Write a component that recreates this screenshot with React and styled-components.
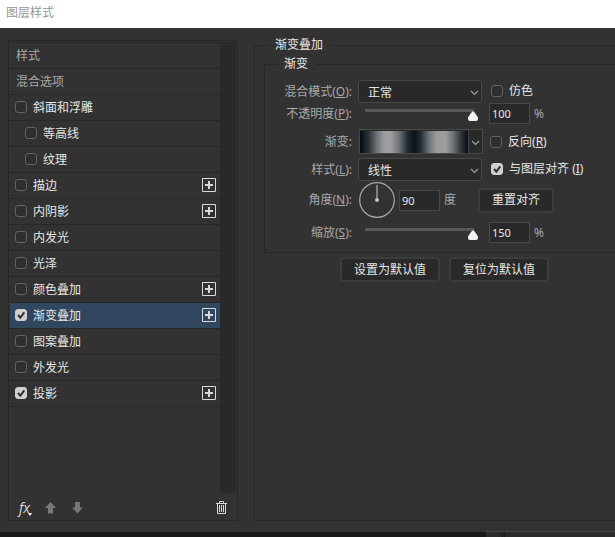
import React, { useState } from 'react';
import styled, { createGlobalStyle, css } from 'styled-components';

const c = {
  face: '#323232',
  line: '#272727',
  well: '#292929',
  edge: '#484848',
  bright: '#e6e6e6',
  dim: '#a8a8a8',
  select: '#30475f',
};

const GlobalStyle = createGlobalStyle`
  * { box-sizing: border-box; }
  body { margin: 0; background: ${c.face}; }
  body, button, input, select {
    font-family: "Noto Sans", "Noto Sans CJK SC", sans-serif;
    font-size: 12px;
    line-height: 16px;
  }
`;

const Window = styled.div`
  min-height: 100vh;
  display: flex;
  flex-direction: column;
  color: ${c.bright};
`;

const TitleBar = styled.header`
  height: 28px;
  padding: 0 6px 2px;
  display: flex;
  align-items: center;
  background: #fff;
  color: #959595;
`;

const Title = styled.h1`
  margin: 0;
  font-size: 12px;
  font-weight: 400;
`;

const Body = styled.main`
  flex: 1;
  display: flex;
  gap: 16px;
  padding: 9px 0 10px 8px;
`;

const StylePanel = styled.section`
  width: 230px;
  flex: none;
  margin-top: 3px;
  padding: 1px;
  border: 1px solid ${c.line};
  display: flex;
  flex-direction: column;
`;

const ListArea = styled.div`
  flex: 1;
  display: flex;
`;

const StyleList = styled.ul`
  flex: 1;
  margin: 0;
  padding: 0;
  list-style: none;
  border-top: 1px solid ${c.line};
`;

const ScrollTrack = styled.div`
  width: 16px;
  background: ${c.well};
`;

const StyleRow = styled.li`
  height: 26px;
  padding: 0 4px ${(p) => (p.$plain ? '0' : '1px')} ${(p) => (p.$indent ? '15px' : p.$plain ? '6px' : '5px')};
  display: flex;
  align-items: center;
  justify-content: space-between;
  border-bottom: 1px solid ${c.line};
  color: ${(p) => (p.$plain ? c.dim : c.bright)};
  background: ${(p) => (p.$selected ? c.select : 'transparent')};
  label > span:last-child { padding-top: 2px; }
`;

const CheckLabel = styled.label`
  display: flex;
  align-items: center;
  gap: 6px;
  white-space: pre;
`;

const CheckCell = styled.span`
  display: grid;
  width: 12px;
  height: 12px;
  > * { grid-area: 1 / 1; }
`;

const CheckInput = styled.input`
  appearance: none;
  width: 12px;
  height: 12px;
  margin: 0;
  border: 1px solid #626262;
  border-radius: 3px;
  background: #2f2f2f;
  &:checked {
    border-color: #d0d0d0;
    background: #d0d0d0;
  }
`;

const CheckMark = styled.svg`
  width: 12px;
  height: 12px;
  pointer-events: none;
`;

const iconButton = css`
  border: 0;
  padding: 0;
  background: none;
  color: inherit;
  display: flex;
`;

const AddButton = styled.button`
  ${iconButton}
`;

const Footer = styled.div`
  height: 26px;
  padding: 3px 9px 0 8px;
  display: flex;
  align-items: center;
`;

const FooterButton = styled.button`
  ${iconButton}
  width: 27px;
  color: ${(p) => (p.$active ? '#d8d8d8' : '#777')};
  &:last-child {
    width: auto;
    margin-left: auto;
  }
`;

const FxText = styled.span`
  padding-left: 1px;
  font: italic 500 14px/16px "Open Sans", sans-serif;
`;

const FxArrow = styled.svg`
  align-self: flex-end;
  width: 4px;
  height: 3px;
  margin-left: -2px;
`;

const Group = styled.fieldset`
  min-width: 0;
  margin: 0;
  border: 1px solid ${c.line};
  border-right: 0;
  ${(p) => (p.$outer
    ? css`flex: 1; padding: 3px 0 0 9px;`
    : css`padding: 8px 0 9px 8px;`)}
`;

const Legend = styled.legend`
  height: 16px;
  margin-left: 5px;
  padding: 0 8px 0 6px;
`;

const Field = styled.div`
  display: flex;
  align-items: center;
  margin-top: ${(p) => p.$space || 0}px;
`;

const FieldLabel = styled.label`
  width: 79px;
  flex: none;
  margin-right: ${(p) => p.$gap}px;
  text-align: right;
  white-space: nowrap;
  color: ${c.dim};
`;

const SelectBox = styled.span`
  width: 124px;
  height: 23px;
  display: grid;
  align-items: center;
  border: 1px solid ${c.edge};
  border-radius: 3px;
  background: ${c.well};
  > * { grid-area: 1 / 1; }
`;

const Select = styled.select`
  appearance: none;
  width: 100%;
  height: 21px;
  padding: 2px 20px 0 9px;
  border: 0;
  background: transparent;
  color: ${c.bright};
`;

const Chevron = styled.svg`
  justify-self: end;
  width: 9px;
  height: 6px;
  margin: 3px 2px 0 0;
  pointer-events: none;
`;

const Slider = styled.input`
  appearance: none;
  align-self: flex-start;
  width: 113px;
  height: 12px;
  margin: 6px 11px 0 6px;
  background: linear-gradient(#595959, #595959) 0 0 / 109px 3px no-repeat;
  &::-webkit-slider-thumb {
    appearance: none;
    width: 10px;
    height: 10px;
    margin-top: 2px;
    background: #f2f2f2;
    border-radius: 0 0 2px 2px;
    clip-path: polygon(50% 0, 70% 20%, 100% 65%, 100% 100%, 0 100%, 0 65%, 30% 20%);
  }
`;

const NumberInput = styled.input`
  width: 41px;
  height: 21px;
  padding: 0 2px;
  border: 1px solid ${c.edge};
  background: ${c.well};
  color: ${c.bright};
  font-size: 11px;
`;

const Unit = styled.span`
  margin-left: 4px;
  color: ${c.dim};
`;

const GradientPicker = styled.div`
  width: 124px;
  height: 25px;
  display: flex;
  border: 1px solid ${c.edge};
  background: ${c.well};
`;

const GradientSwatch = styled.button`
  flex: 1;
  border: 0;
  margin: 1px 0 0;
  padding: 0;
  background: linear-gradient(90deg,
    #020b16 0%, #2c3237 8%, #71757a 16%, #9a9a9a 22%, #9f9f9f 28%, #71757a 36%,
    #232a31 44%, #0a131e 50%, #232a31 56%, #71757a 64%, #9a9a9a 71%, #9f9f9f 79%,
    #71757a 86%, #2c3237 94%, #040d19 100%);
`;

const GradientMenu = styled.button`
  ${iconButton}
  width: 14px;
  padding-left: 2px;
  border-left: 1px solid ${c.edge};
  align-items: center;
`;

const Dial = styled.svg`
  width: 36px;
  height: 36px;
  flex: none;
  margin-right: 4px;
`;

const Extra = styled.div`
  margin-left: ${(p) => (p.$wide ? '9px' : '7px')};
  padding-bottom: ${(p) => (p.$wide ? '2px' : '0')};
`;

const Button = styled.button`
  height: 25px;
  padding: 0 12px;
  border: 2px solid #3c3c3c;
  border-radius: 4px;
  background: ${c.well};
  color: ${c.bright};
  white-space: nowrap;
`;

const FieldAction = styled(Button)`
  margin-left: 22px;
`;

const ButtonBar = styled.div`
  display: flex;
  gap: 9px;
  margin-top: 4px;
  padding-left: 76px;
`;

const Backdrop = styled.div`
  height: 6px;
  display: grid;
  grid-template-columns: 486fr 129fr;
`;

const BackdropDark = styled.div`
  background: #191919;
  border-top: 1px solid ${c.face};
`;

const BackdropPanel = styled.div`
  padding-left: 16px;
  background: #2b2b2b;
  border-top: 1px solid #454545;
`;

const Seam = styled.div`
  width: 3px;
  height: 5px;
  border: solid #1d1d1d;
  border-width: 0 1px;
`;

function Check({ label, initial, accessKey }) {
  const [on, setOn] = useState(!!initial);
  return (
    <CheckLabel>
      <CheckCell>
        <CheckInput type="checkbox" checked={on} onChange={(e) => setOn(e.target.checked)} />
        {on && (
          <CheckMark viewBox="0 0 12 12" aria-hidden="true">
            <path d="M3 6l2.3 2.6L9.3 3.4" fill="none" stroke="#303030" strokeWidth="2" />
          </CheckMark>
        )}
      </CheckCell>
      <span>{label}{accessKey && <>(<u>{accessKey}</u>)</>}</span>
    </CheckLabel>
  );
}

const ChevronIcon = () => (
  <Chevron viewBox="0 0 9 6" aria-hidden="true">
    <path d="M1 1l3.5 3.5L8 1" fill="none" stroke="#a0a0a0" strokeWidth="1.2" />
  </Chevron>
);

function Label({ htmlFor, text, accessKey, gap = 7 }) {
  return (
    <FieldLabel htmlFor={htmlFor} $gap={gap}>
      {text}{accessKey && <>(<u>{accessKey}</u>)</>}:
    </FieldLabel>
  );
}

function Dropdown({ id, options }) {
  return (
    <SelectBox>
      <Select id={id} defaultValue={options[0]}>
        {options.map((o) => <option key={o}>{o}</option>)}
      </Select>
      <ChevronIcon />
    </SelectBox>
  );
}

function Amount({ id, label, max, initial }) {
  const [value, setValue] = useState(initial);
  const change = (e) => setValue(e.target.value);
  return (
    <>
      <Slider type="range" min="0" max={max} value={value} onChange={change} aria-label={label} />
      <NumberInput id={id} value={value} onChange={change} />
      <Unit>%</Unit>
    </>
  );
}

const styles = [
  { name: '斜面和浮雕' },
  { name: '等高线', indent: true },
  { name: '纹理', indent: true },
  { name: '描边', add: true },
  { name: '内阴影', add: true },
  { name: '内发光' },
  { name: '光泽' },
  { name: '颜色叠加', add: true },
  { name: '渐变叠加', add: true, on: true, selected: true },
  { name: '图案叠加' },
  { name: '外发光' },
  { name: '投影', add: true, on: true },
];

export default function App() {
  return (
    <Window>
      <GlobalStyle />
      <TitleBar><Title>图层样式</Title></TitleBar>
      <Body>
        <StylePanel>
          <ListArea>
            <StyleList>
              <StyleRow $plain>样式</StyleRow>
              <StyleRow $plain>混合选项</StyleRow>
              {styles.map((s) => (
                <StyleRow key={s.name} $indent={s.indent} $selected={s.selected}>
                  <Check label={s.name} initial={s.on} />
                  {s.add && (
                    <AddButton aria-label={`添加${s.name}`}>
                      <svg width="14" height="14" viewBox="0 0 14 14" aria-hidden="true">
                        <path d="M.5 .5h13v13H.5z" fill="none" stroke="#d8d8d8" />
                        <path d="M7 3v8M3 7h8" stroke="#d8d8d8" strokeWidth="2" />
                      </svg>
                    </AddButton>
                  )}
                </StyleRow>
              ))}
            </StyleList>
            <ScrollTrack />
          </ListArea>
          <Footer>
            <FooterButton $active aria-label="效果">
              <FxText>fx</FxText>
              <FxArrow viewBox="0 0 4 3" aria-hidden="true"><path d="M0 0h4L2 3z" fill="#fff" /></FxArrow>
            </FooterButton>
            <FooterButton aria-label="上移">
              <svg width="11" height="12" viewBox="0 0 11 12" aria-hidden="true">
                <path d="M5.5 0L11 6H8v5.5H3V6H0z" fill="currentColor" />
              </svg>
            </FooterButton>
            <FooterButton aria-label="下移">
              <svg width="11" height="12" viewBox="0 0 11 12" aria-hidden="true">
                <path d="M5.5 11.5L11 5.5H8V0H3v5.5H0z" fill="currentColor" />
              </svg>
            </FooterButton>
            <FooterButton $active aria-label="删除">
              <svg width="11" height="13" viewBox="0 0 11 13" aria-hidden="true">
                <g fill="none" stroke="currentColor">
                  <path d="M0 2.5h11M3.5 2V.5h4V2M1.5 3v9.5h8V3" />
                  <path d="M3.5 4v7M5.5 4v7M7.5 4v7" />
                </g>
              </svg>
            </FooterButton>
          </Footer>
        </StylePanel>

        <Group $outer>
          <Legend>渐变叠加</Legend>
          <Group>
            <Legend>渐变</Legend>
            <Field>
              <Label htmlFor="blend" text="混合模式" accessKey="O" gap={6} />
              <Dropdown id="blend" options={['正常', '溶解', '正片叠底']} />
              <Extra $wide><Check label="仿色" /></Extra>
            </Field>
            <Field>
              <Label htmlFor="opacity" text="不透明度" accessKey="P" />
              <Amount id="opacity" label="不透明度" max="100" initial="100" />
            </Field>
            <Field $space={5}>
              <Label htmlFor="gradient" text="渐变" />
              <GradientPicker>
                <GradientSwatch id="gradient" />
                <GradientMenu aria-label="选择渐变"><ChevronIcon /></GradientMenu>
              </GradientPicker>
              <Extra><Check label="反向" accessKey="R" /></Extra>
            </Field>
            <Field $space={4}>
              <Label htmlFor="shape" text="样式" accessKey="L" gap={6} />
              <Dropdown id="shape" options={['线性', '径向', '角度']} />
              <Extra $wide><Check label="与图层对齐 " accessKey="I" initial /></Extra>
            </Field>
            <Field $space={1}>
              <Label htmlFor="angle" text="角度" accessKey="N" />
              <Dial viewBox="0 0 36 36" aria-hidden="true">
                <circle cx="18" cy="18" r="17.3" fill="none" stroke="#a8a8a8" strokeWidth="1.2" />
                <path d="M18 3v15" stroke="#808080" strokeWidth="2" />
                <circle cx="18" cy="18" r="2" fill="#c4c4c4" />
              </Dial>
              <NumberInput id="angle" defaultValue="90" />
              <Unit>度</Unit>
              <FieldAction>重置对齐</FieldAction>
            </Field>
            <Field $space={4}>
              <Label htmlFor="scale" text="缩放" accessKey="S" />
              <Amount id="scale" label="缩放" max="150" initial="150" />
            </Field>
          </Group>
          <ButtonBar>
            <Button>设置为默认值</Button>
            <Button>复位为默认值</Button>
          </ButtonBar>
        </Group>
      </Body>
      <Backdrop>
        <BackdropDark />
        <BackdropPanel><Seam /></BackdropPanel>
      </Backdrop>
    </Window>
  );
}
